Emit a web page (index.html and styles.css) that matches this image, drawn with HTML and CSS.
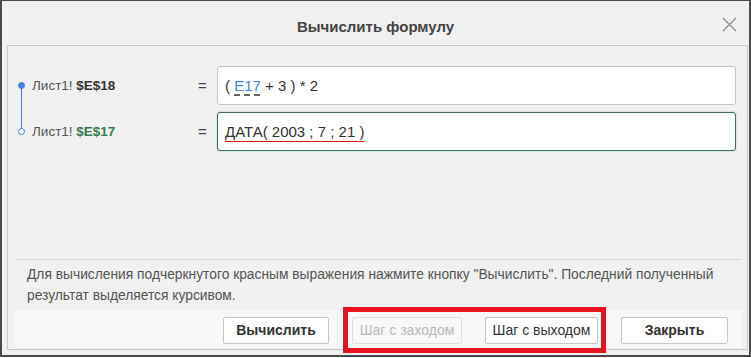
FILE: index.html
```html
<!DOCTYPE html>
<html lang="ru">
<head>
  <meta charset="UTF-8">
  <title>Вычислить формулу</title>
  <link rel="stylesheet" href="styles.css">
</head>
<body>

  <div class="dialog">
    <div class="dialog-header">
      <span></span>
      <span class="dialog-title">Вычислить формулу</span>
      <button class="close-button" title="Закрыть">
        <svg width="15" height="15" viewBox="0 0 15 15">
          <path d="M1 1 L14 14 M14 1 L1 14" stroke="#8a8a8a" stroke-width="1.1" fill="none"/>
        </svg>
      </button>
    </div>

    <div class="dialog-panel">
      <div class="formulas">
        <div class="formula-row">
          <div class="marker marker-first"></div>
          <div class="ref">Лист1! <b>$E$18</b></div>
          <div class="equals">=</div>
          <div class="formula-box">( <span class="ref-link">E17</span> + 3 ) * 2</div>
        </div>
        <div class="formula-row">
          <div class="marker marker-last"></div>
          <div class="ref">Лист1! <b class="ref-current">$E$17</b></div>
          <div class="equals">=</div>
          <div class="formula-box formula-box-active"><span class="to-evaluate">ДАТА( 2003 ; 7 ; 21 )</span></div>
        </div>
      </div>

      <div class="footer">
        <p class="hint">Для вычисления подчеркнутого красным выражения нажмите кнопку "Вычислить". Последний полученный результат выделяется курсивом.</p>
        <div class="button-bar">
          <button class="dlg-button bold btn-eval">Вычислить</button>
          <button class="dlg-button btn-step-in" disabled>Шаг с заходом</button>
          <button class="dlg-button btn-step-out">Шаг с выходом</button>
          <button class="dlg-button bold btn-close">Закрыть</button>
        </div>
      </div>
    </div>
  </div>

  <div class="highlight-frame"></div>

</body>
</html>
```

FILE: styles.css
```css
body {
  margin: 0;
  width: 751px;
  height: 358px;
  background: #ffffff;
  font-family: "Liberation Sans", Arial, sans-serif;
  position: relative;
  overflow: hidden;
}

.dialog {
  box-sizing: border-box;
  width: 751px;
  height: 357px;
  background: #f0f0f0;
  border: 2px solid #4a4a4a;
  border-top-width: 1px;
  display: flex;
  flex-direction: column;
}

.dialog-header {
  height: 44px;
  flex-shrink: 0;
  display: grid;
  grid-template-columns: 1fr auto 1fr;
  align-items: center;
}

.dialog-title {
  font-size: 15px;
  font-weight: bold;
  color: #444;
  padding-top: 6px;
}

.close-button {
  justify-self: end;
  margin-right: 11px;
  margin-top: 3px;
  width: 17px;
  height: 17px;
  padding: 0;
  border: none;
  background: transparent;
  display: flex;
  align-items: center;
  justify-content: center;
}

.dialog-panel {
  flex: 1;
  margin: 0 1px 5px 5px;
  border: 1px solid #c9c9c9;
  display: flex;
  flex-direction: column;
}

.formulas {
  height: 213px;
  box-sizing: border-box;
  padding: 20px 11px 0 10px;
  display: flex;
  flex-direction: column;
  gap: 7px;
}

.formula-row {
  display: grid;
  grid-template-columns: 14px 163px 22px 1fr;
  align-items: center;
  height: 39px;
}

.marker {
  position: relative;
  width: 7px;
  height: 7px;
  box-sizing: border-box;
  border-radius: 50%;
  border: 1px solid #4a7fdb;
}

.marker-first {
  background: #4a7fdb;
}

.marker-first::after {
  content: "";
  position: absolute;
  left: 2px;
  top: 5px;
  width: 1px;
  height: 41px;
  background: #4a7fdb;
}

.marker-last {
  background: #ffffff;
}

.ref {
  font-size: 13.5px;
  color: #555;
}

.ref b {
  color: #333;
}

.ref b.ref-current {
  color: #3b7a52;
}

.equals {
  font-size: 15px;
  color: #444;
  padding-left: 3px;
}

.formula-box {
  height: 39px;
  box-sizing: border-box;
  background: #ffffff;
  border: 1px solid #c6c6c6;
  border-radius: 3px;
  padding: 0 7px;
  display: flex;
  align-items: center;
  font-size: 15px;
  color: #333;
  white-space: pre;
}

.formula-box-active {
  border-color: #3f7352;
  box-shadow: 0 0 2px rgba(63, 115, 82, 0.35);
}

.ref-link {
  color: #4a7fdb;
  text-decoration: underline dashed #333;
  text-underline-offset: 4px;
}

.to-evaluate {
  text-decoration: underline solid #d41c1c;
  text-underline-offset: 4px;
}

.footer {
  flex: 1;
  margin: 0 5px 0 7px;
  border-top: 1px solid #d8d8d8;
  display: flex;
  flex-direction: column;
}

.hint {
  margin: 0;
  padding: 4px 12px 0 12px;
  font-size: 13.8px;
  line-height: 21px;
  color: #555;
  height: 46px;
  box-sizing: border-box;
  flex-shrink: 0;
}

.button-bar {
  margin-top: 4px;
  height: 38px;
  background: #f7f7f7;
  display: flex;
  justify-content: flex-end;
  align-items: center;
  gap: 23px;
  padding-right: 14px;
  padding-top: 2px;
  box-sizing: border-box;
}

.dlg-button {
  height: 27px;
  box-sizing: border-box;
  background: #ffffff;
  border: 1px solid #c6c6c6;
  border-radius: 2px;
  font-family: "Liberation Sans", Arial, sans-serif;
  font-size: 14px;
  color: #333;
  padding: 0;
}

.dlg-button.bold {
  font-weight: bold;
}

.dlg-button:disabled {
  background: #f7f7f7;
  border-color: #dedede;
  color: #bbbbbb;
}

.btn-eval { width: 106px; }
.btn-step-in { width: 110px; }
.btn-step-out { width: 113px; }
.btn-close { width: 107px; }

.highlight-frame {
  position: absolute;
  left: 343px;
  top: 307px;
  width: 263px;
  height: 46px;
  box-sizing: border-box;
  border: 5px solid #e5141f;
}
```
